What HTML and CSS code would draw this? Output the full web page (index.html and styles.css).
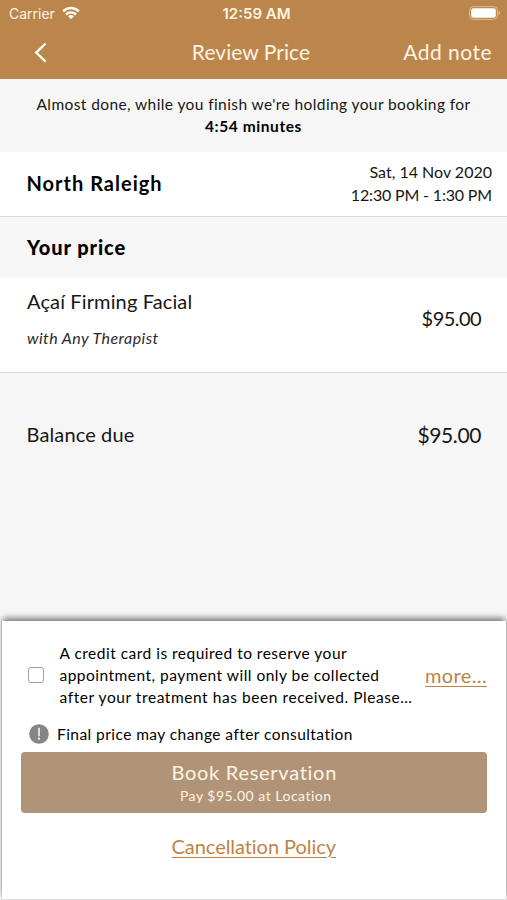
FILE: index.html
```html
<!DOCTYPE html>
<html lang="en">
<head>
<meta charset="utf-8">
<title>Review Price</title>
<link rel="stylesheet" href="styles.css">
</head>
<body>
<div class="screen">
  <header class="header">
    <div class="status">
      <div class="carrier"><span>Carrier</span>
        <svg class="wifi" width="18" height="14" viewBox="0 0 18 14" fill="none" stroke="#fffaf4" stroke-width="2.5"><path d="M1.2 5.3C5.6 1 12.4 1 16.8 5.3M4 8.5c2.9-2.7 7.1-2.7 10 0"/><path d="M9 13.2 6 10.2c1.7-1.5 4.3-1.5 6 0z" fill="#fffaf4" stroke="none"/></svg>
      </div>
      <span class="clock">12:59 AM</span>
      <svg class="battery" width="32" height="14" viewBox="0 0 32 14"><rect x=".6" y=".6" width="27.8" height="12.8" rx="3.6" fill="none" stroke="#dcbb94" stroke-width="1"/><rect x="2.2" y="2.2" width="24.6" height="9.6" rx="2" fill="#fff"/><path d="M29.7 4.8c1.7.6 1.7 3.8 0 4.4z" fill="#e3c6a4"/></svg>
    </div>
    <nav class="nav">
      <svg class="back" width="14" height="22" viewBox="0 0 14 22" fill="none" stroke="#fffaf4" stroke-width="2.4"><path d="M12.6 1.5 3.2 10.6l9.4 9.1"/></svg>
      <span class="title">Review Price</span>
      <span class="note">Add note</span>
    </nav>
  </header>
  <section class="notice">
    <p class="hold">Almost done, while you finish we're holding your booking for</p>
    <p class="timer">4:54 minutes</p>
  </section>
  <section class="location">
    <h2 class="place">North Raleigh</h2>
    <div class="when"><p class="date">Sat, 14 Nov 2020</p><p class="time">12:30 PM - 1:30 PM</p></div>
  </section>
  <h2 class="heading">Your price</h2>
  <section class="service">
    <div><p class="name">Açaí Firming Facial</p><p class="therapist">with Any Therapist</p></div>
    <span class="price">$95.00</span>
  </section>
  <section class="balance">
    <span class="due">Balance due</span><span class="total">$95.00</span>
  </section>
  <section class="sheet">
    <div class="consent">
      <span class="checkbox"></span>
      <div class="terms">
        <p class="t1">A credit card is required to reserve your</p>
        <p class="t1">appointment, payment will only be collected</p>
        <p class="t3">after your treatment has been received. Please…</p>
      </div>
      <a class="more">more...</a>
    </div>
    <div class="warning">
      <svg width="20" height="20" viewBox="0 0 20 20"><circle cx="10" cy="10" r="9.8" fill="#858585"/><path d="M10 4.3v7.4" stroke="#f4f4f4" stroke-width="1.6" stroke-linecap="round"/><circle cx="10" cy="14.7" r="1.1" fill="#f4f4f4"/></svg>
      <span>Final price may change after consultation</span>
    </div>
    <div class="book"><span class="book-title">Book Reservation</span><span class="book-sub">Pay $95.00 at Location</span></div>
    <a class="policy">Cancellation Policy</a>
  </section>
</div>
</body>
</html>
```
FILE: styles.css
```css
* { box-sizing: border-box; }
body { margin: 0; font-family: Lato, "Liberation Sans", sans-serif; color: #161616; background: #f6f6f6; }
p, h2 { margin: 0; white-space: nowrap; }
svg { display: block; flex: none; }
.screen { width: 507px; height: 900px; display: flex; flex-direction: column; overflow: hidden; }

.header { height: 79px; background: #ba864b; color: #fff3e4; }
.status { height: 27px; display: grid; grid-template-columns: 1fr auto 1fr; align-items: center; font-family: Inter, sans-serif; line-height: 27px; padding: 0 7px 0 9px; }
.carrier { display: flex; align-items: center; gap: 7px; font-size: 14px; }
.wifi { margin-top: -2px; }
.clock { font-size: 15px; font-weight: 600; padding-left: 4px; }
.battery { justify-self: end; margin-right: -1px; margin-top: -1px; }
.nav { height: 50px; display: grid; grid-template-columns: 1fr auto 1fr; align-items: center; padding: 0 15px 0 33px; font-size: 21px; line-height: 50px; }
.back { margin-top: 1px; }
.title { letter-spacing: .05px; padding-right: 28px; margin-left: 5px; }
.note { justify-self: end; letter-spacing: .47px; }

.notice { height: 73px; padding-top: 14px; text-align: center; font-size: 15.5px; line-height: 22px; }
.hold { letter-spacing: .4px; }
.timer { font-weight: bold; letter-spacing: .58px; color: #000; }

.location { height: 65px; background: #fff; border-bottom: 1px solid #d8d8d8; padding: 0 15px 2px 26.5px; display: flex; justify-content: space-between; align-items: center; }
.place { font-size: 20px; font-weight: bold; letter-spacing: 1px; color: #000; }
.when { font-size: 16px; line-height: 23px; text-align: right; }
.time { letter-spacing: -.17px; }
.heading { height: 61px; line-height: 61px; padding-left: 27px; font-size: 20px; font-weight: 900; letter-spacing: .9px; color: #000; }

.service { height: 95px; background: #fff; border-bottom: 1px solid #d8d8d8; padding: 5px 26px 0 27px; display: flex; justify-content: space-between; }
.name { font-size: 20px; line-height: 36px; letter-spacing: .13px; }
.therapist { font-size: 16px; line-height: 38px; font-style: italic; letter-spacing: .43px; color: #2c2c2c; }
.price { font-size: 20px; line-height: 71px; letter-spacing: -.55px; }
.balance { height: 123px; padding: 0 26px 0 26.5px; display: flex; justify-content: space-between; font-size: 20px; line-height: 123px; }
.due { letter-spacing: .13px; }
.total { font-size: 21px; letter-spacing: -.4px; }

.sheet { height: 278px; margin: auto 1px 1px 2px; background: #fff; padding: 20.5px 19px 0 18.5px; display: flex; flex-direction: column; box-shadow: 0 -4px 6px -1px rgba(0, 0, 0, .5), 0 1px 0 1px #dedede; }
.consent { display: flex; align-items: center; padding-left: 7.5px; }
.checkbox { width: 16px; height: 16px; border: 1.5px solid #a0a0a0; border-radius: 3px; flex: none; margin-top: 1px; }
.terms { margin-left: 15.5px; font-size: 15.5px; line-height: 22px; flex: 1; color: #000; }
.t1 { letter-spacing: .487px; }
.t3 { letter-spacing: .569px; }
.more, .policy { color: #bd8345; font-size: 20px; text-decoration: underline; text-decoration-thickness: 1px; text-underline-offset: 3px; }
.more { letter-spacing: .37px; }
.warning { display: flex; align-items: center; gap: 8.5px; padding-left: 8px; margin-top: 15px; height: 22px; font-size: 15.5px; line-height: 22px; letter-spacing: .44px; color: #000; }
.warning svg { margin-top: 1px; }
.book { height: 61px; margin-top: 7px; border-radius: 4px; background: #b19478; color: #fff3e4; display: flex; flex-direction: column; align-items: center; padding-top: 7px; }
.book-title { font-size: 20px; line-height: 26px; letter-spacing: .72px; padding-left: 1px; }
.book-sub { font-size: 14px; line-height: 22px; letter-spacing: .5px; padding-left: 4px; }
.policy { align-self: center; line-height: 24px; margin-top: 21px; letter-spacing: -.05px; }
```
